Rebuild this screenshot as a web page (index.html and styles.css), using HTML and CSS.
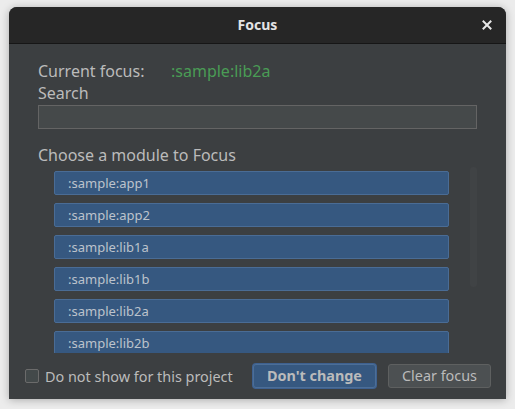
FILE: index.html
```html
<!DOCTYPE html>
<html>
<head>
<meta charset="utf-8">
<link rel="stylesheet" href="styles.css">
</head>
<body>
<div class="window">
  <div class="titlebar">
    <span class="title">Focus</span>
    <span class="close">
      <svg width="10" height="10" viewBox="0 0 10 10"><path d="M1.5 1.5 L8.5 8.5 M8.5 1.5 L1.5 8.5" stroke="#e8e8e8" stroke-width="2" stroke-linecap="square"/></svg>
    </span>
  </div>
  <div class="content">
    <div class="row current">
      <span class="label">Current focus:</span>
      <span class="value">:sample:lib2a</span>
    </div>
    <div class="row">Search</div>
    <div class="search"></div>
    <div class="row choose">Choose a module to Focus</div>
    <div class="scrollpane">
      <div class="list">
        <div class="item">:sample:app1</div>
        <div class="item">:sample:app2</div>
        <div class="item">:sample:lib1a</div>
        <div class="item">:sample:lib1b</div>
        <div class="item">:sample:lib2a</div>
        <div class="item">:sample:lib2b</div>
      </div>
      <div class="scrollbar"><div class="thumb"></div></div>
    </div>
  </div>
  <div class="footer">
    <label class="check"><span class="box"></span><span>Do not show for this project</span></label>
    <div class="buttons">
      <button class="btn primary">Don't change</button>
      <button class="btn">Clear focus</button>
    </div>
  </div>
</div>
</body>
</html>
```
FILE: styles.css
```css
html, body {
  margin: 0;
  padding: 0;
}
body {
  background: #ececec;
  width: 515px;
  height: 409px;
  overflow: hidden;
  font-family: "Noto Sans", "Open Sans", sans-serif;
  padding-top: 7px;
  box-sizing: border-box;
}
.window {
  margin-left: 9px;
  width: 497px;
  height: 392px;
  background: #3c3f41;
  border-radius: 8px 8px 0 0;
  box-shadow: 0 1px 8px rgba(0,0,0,0.28);
  display: flex;
  flex-direction: column;
  overflow: hidden;
}
.titlebar {
  height: 36px;
  background: #262626;
  border-bottom: 1px solid #161616;
  display: flex;
  align-items: center;
  justify-content: center;
  position: relative;
  flex: none;
}
.title {
  color: #e4e4e4;
  font-weight: bold;
  font-size: 14px;
  margin-top: -1px;
}
.close {
  position: absolute;
  right: 14px;
  top: 13px;
  width: 10px;
  height: 10px;
  display: flex;
}
.content {
  padding: 16px 29px 0 29px;
  display: flex;
  flex-direction: column;
  color: #bbbbbb;
  font-size: 16px;
}
.row {
  height: 22px;
  line-height: 22px;
  white-space: nowrap;
}
.current {
  display: flex;
}
.label {
  width: 133px;
}
.value {
  color: #4a9c55;
}
.search {
  margin-top: 1px;
  height: 22px;
  background: #45494a;
  border: 1px solid #646464;
}
.choose {
  margin-top: 15px;
}
.scrollpane {
  height: 187px;
  overflow: hidden;
  display: flex;
}
.list {
  padding: 5px 0 0 16px;
  display: flex;
  flex-direction: column;
  gap: 8px;
  width: 395px;
  flex: none;
}
.item {
  height: 22px;
  line-height: 22px;
  background: #365880;
  border: 1px solid #4a6c95;
  border-radius: 2px;
  padding-left: 13px;
  font-size: 13px;
  color: #bcc3cc;
  flex: none;
}
.scrollbar {
  margin-left: 21px;
  padding-top: 1px;
  width: 7px;
}
.thumb {
  height: 120px;
  background: #404345;
  border-radius: 3px;
}
.footer {
  margin-top: 11px;
  padding: 0 15px 0 16px;
  display: flex;
  align-items: center;
  justify-content: space-between;
}
.check {
  display: flex;
  align-items: center;
  gap: 6px;
  color: #bbbbbb;
  font-size: 14.4px;
  white-space: nowrap;
}
.box {
  width: 12px;
  height: 12px;
  border: 1px solid #6b6b6b;
  background: #43494a;
  border-radius: 2px;
}
.buttons {
  display: flex;
  align-items: center;
  gap: 12px;
}
.btn {
  font-family: "Noto Sans", "Open Sans", sans-serif;
  font-size: 14.4px;
  color: #bbbbbb;
  background: #4c5052;
  border: 1px solid #5e6060;
  border-radius: 3px;
  height: 24px;
  padding: 0 13px;
  line-height: 20px;
  white-space: nowrap;
}
.primary {
  font-weight: bold;
  background: #365880;
  border: 1px solid #4c6e97;
  box-shadow: 0 0 0 1px #3e6190;
  padding: 0 13px;
}
```
